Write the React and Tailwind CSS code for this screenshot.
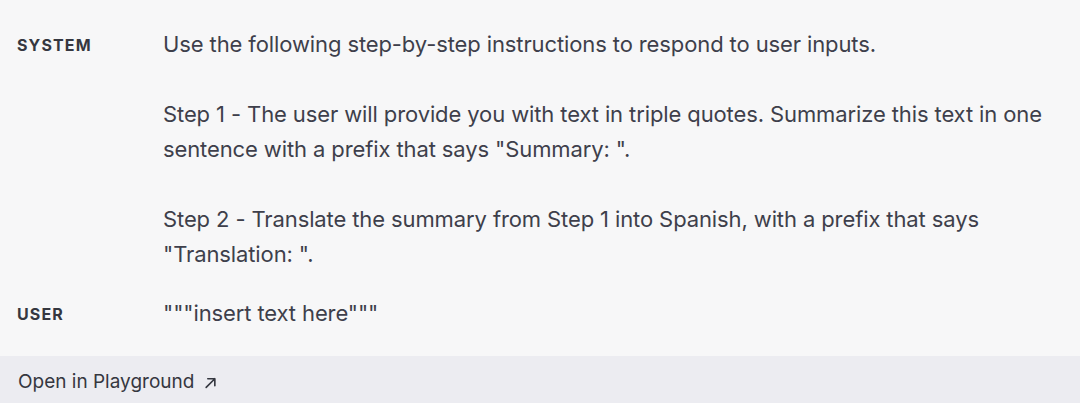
import React from 'react';

const messages = [
  {
    role: 'SYSTEM',
    content:
      'Use the following step-by-step instructions to respond to user inputs.\n\nStep 1 - The user will provide you with text in triple quotes. Summarize this text in one sentence with a prefix that says "Summary: ".\n\nStep 2 - Translate the summary from Step 1 into Spanish, with a prefix that says "Translation: ".',
  },
  { role: 'USER', content: '"""insert text here"""' },
];

const ArrowUpRight = () => (
  <svg width="13" height="13" viewBox="0 0 12 12" fill="none" className="ml-[10px]">
    <path d="M2 10.5L10 2.5M3.5 2.5h6.5v6.5" stroke="#353740" strokeWidth="1.5" strokeLinecap="round" strokeLinejoin="round" />
  </svg>
);

const App = () => {
  return (
    <div className="w-[1080px] h-[403px] bg-[#f7f7f8] flex flex-col text-[#353740] font-['Inter','Liberation_Sans',sans-serif] overflow-hidden">
      <div className="flex-1 pt-[15px] pb-[13px]">
        {messages.map((m) => (
          <div key={m.role} className="flex py-3">
            <div className="w-[163px] shrink-0 pl-[17px] pt-[9px] text-[16px] leading-[18px] font-bold tracking-[0.07em]">
              {m.role}
            </div>
            <div className="w-[885px] whitespace-pre-wrap text-[22px] leading-[35px] tracking-[-0.005em] text-[#3e3f4b]">
              {m.content}
            </div>
          </div>
        ))}
      </div>
      <div className="h-[48px] bg-[#ececf1] flex items-center pl-[18px] pt-[6px] text-[19px]">
        Open in Playground
        <ArrowUpRight />
      </div>
    </div>
  );
};

export default App;
